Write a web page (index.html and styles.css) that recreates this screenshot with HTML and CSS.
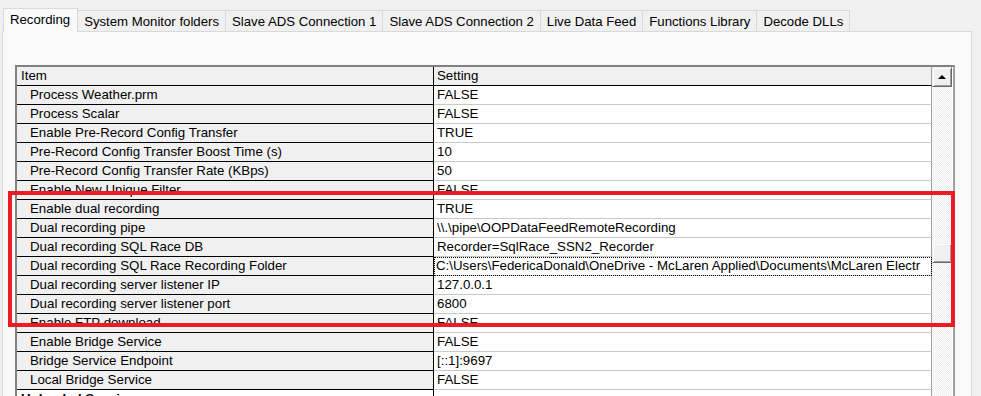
FILE: index.html
```html
<!DOCTYPE html>
<html lang="en">
<head>
    <meta charset="UTF-8">
    <title>Recording settings</title>
    <link rel="stylesheet" href="styles.css">
</head>
<body>
    <div class="tabs">
        <div class="tab selected">Recording</div>
        <div class="tab">System Monitor folders</div>
        <div class="tab">Slave ADS Connection 1</div>
        <div class="tab">Slave ADS Connection 2</div>
        <div class="tab">Live Data Feed</div>
        <div class="tab">Functions Library</div>
        <div class="tab">Decode DLLs</div>
    </div>
    <div class="panel">
        <div class="grid">
            <div class="table">
                <div class="head">Item</div>
                <div class="head value">Setting</div>

                <div class="item">Process Weather.prm</div><div class="value">FALSE</div>
                <div class="item">Process Scalar</div><div class="value">FALSE</div>
                <div class="item">Enable Pre-Record Config Transfer</div><div class="value">TRUE</div>
                <div class="item">Pre-Record Config Transfer Boost Time (s)</div><div class="value">10</div>
                <div class="item">Pre-Record Config Transfer Rate (KBps)</div><div class="value">50</div>
                <div class="item">Enable New Unique Filter</div><div class="value">FALSE</div>
                <div class="item">Enable dual recording</div><div class="value">TRUE</div>
                <div class="item">Dual recording pipe</div><div class="value">\\.\pipe\OOPDataFeedRemoteRecording</div>
                <div class="item">Dual recording SQL Race DB</div><div class="value">Recorder=SqlRace_SSN2_Recorder</div>
                <div class="item">Dual recording SQL Race Recording Folder</div><div class="value focused">C:\Users\FedericaDonald\OneDrive - McLaren Applied\Documents\McLaren Electr</div>
                <div class="item">Dual recording server listener IP</div><div class="value">127.0.0.1</div>
                <div class="item">Dual recording server listener port</div><div class="value">6800</div>
                <div class="item">Enable FTP download</div><div class="value">FALSE</div>
                <div class="item">Enable Bridge Service</div><div class="value">FALSE</div>
                <div class="item">Bridge Service Endpoint</div><div class="value">[::1]:9697</div>
                <div class="item">Local Bridge Service</div><div class="value">FALSE</div>
                <div class="item category">Unloaded Sessions</div><div class="value"></div>
            </div>
            <div class="scrollbar">
                <div class="scroll-btn"><span class="arrow-up"></span></div>
                <div class="thumb" style="margin-top: 156px;"></div>
            </div>
        </div>
    </div>
    <div class="highlight"></div>
</body>
</html>
```

FILE: styles.css
```css
body {
    margin: 0;
    height: 396px;
    overflow: hidden;
    background-color: #f0f0f0;
    font-family: "Liberation Sans", Arial, sans-serif;
    color: #000;
}

/* Tabs */
.tabs {
    display: flex;
    align-items: flex-end;
    padding: 8px 0 0 3px;
}

.tab {
    height: 20px;
    line-height: 21px;
    padding: 0 6px;
    margin-left: -1px;
    border: 1px solid #d9d9d9;
    border-bottom: none;
    background-color: #f0f0f0;
    font-size: 13.2px;
    white-space: nowrap;
}

.tab.selected {
    height: 23px;
    line-height: 22px;
    margin-left: 0;
    margin-bottom: -1px;
    padding: 0 7px 0 6px;
    background-color: #f9f9f9;
    position: relative;
    z-index: 1;
}

.panel {
    margin: 0 9px 0 2px;
    height: 400px;
    padding: 33px 16px 0 12px;
    border: 1px solid #d9d9d9;
    background-color: #f9f9f9;
}

/* Property grid */
.grid {
    display: flex;
    height: 420px;
    border: 2px solid;
    border-color: #828282 #a0a0a0 #a0a0a0 #828282;
    background-color: #fff;
}

.table {
    display: grid;
    grid-template-columns: 417px 498px;
    grid-auto-rows: 19px;
    align-content: start;
    font-size: 13.3px;
}

.table > div {
    line-height: 18px;
    white-space: nowrap;
    overflow: hidden;
}

.head {
    background-color: #f0f0f0;
    padding-left: 4px;
    border-right: 1px solid #000;
    border-bottom: 1px solid #000;
}

.head.value {
    padding-left: 3px;
    border-right: 1px solid #a0a0a0;
    border-bottom: 1px solid #000;
    background-color: #f0f0f0;
}

.item {
    background-color: #f0f0f0;
    padding-left: 13px;
    border-right: 1px solid #000;
    border-bottom: 1px solid #000;
}

.value {
    background-color: #fff;
    padding-left: 3px;
    border-right: 1px solid #a0a0a0;
    border-bottom: 1px solid #c8c8c8;
}

.value.focused {
    outline: 1px dotted #000;
    outline-offset: -1px;
    padding-left: 2px;
}

.item.category {
    background-color: #fff;
    padding-left: 4px;
    font-weight: bold;
}

/* Scrollbar */
.scrollbar {
    width: 20px;
    background: repeating-conic-gradient(#fff 0 25%, #ececec 0 50%) 0 0 / 2px 2px;
}

.scroll-btn,
.thumb {
    box-sizing: border-box;
    height: 20px;
    background-color: #f0f0f0;
    border: 1px solid;
    border-color: #f0f0f0 #696969 #696969 #f0f0f0;
    box-shadow: inset 1px 1px #fff, inset -1px -1px #a0a0a0;
}

.scroll-btn {
    display: flex;
    align-items: center;
    justify-content: center;
}

.arrow-up {
    width: 0;
    height: 0;
    border-left: 4px solid transparent;
    border-right: 4px solid transparent;
    border-bottom: 4px solid #000;
}

/* Annotation box */
.highlight {
    position: absolute;
    left: 8px;
    top: 191px;
    width: 939px;
    height: 128px;
    border: 4px solid #ed1c24;
}
```
